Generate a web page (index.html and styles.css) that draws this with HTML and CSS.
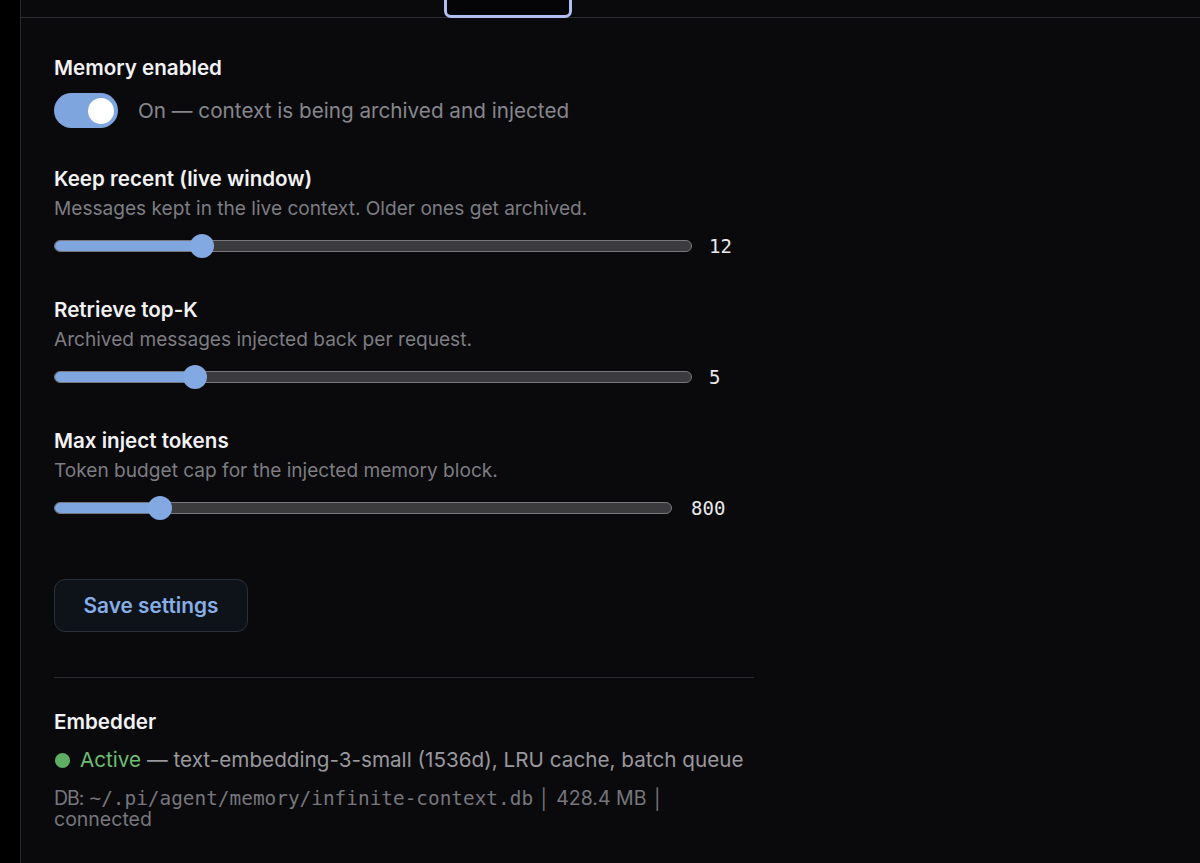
FILE: index.html
```html
<!DOCTYPE html>
<html>
<head>
<meta charset="utf-8">
<link rel="stylesheet" href="styles.css">
</head>
<body>
<div class="app">
  <div class="rail"></div>
  <div class="panel">
    <div class="tabbar">
      <div class="tab"></div>
    </div>
    <div class="content">
      <div class="field">
        <div class="title">Memory enabled</div>
        <div class="toggle-row">
          <div class="toggle"><div class="knob"></div></div>
          <span class="toggle-text">On — context is being archived and injected</span>
        </div>
      </div>

      <div class="setting">
        <div class="label">Keep recent (live window)</div>
        <div class="desc">Messages kept in the live context. Older ones get archived.</div>
        <div class="slider-row">
          <div class="slider" style="--p:0.2222">
            <div class="track"><div class="fill"></div></div>
            <div class="thumb"></div>
          </div>
          <span class="value">12</span>
        </div>
      </div>

      <div class="setting">
        <div class="label">Retrieve top-K</div>
        <div class="desc">Archived messages injected back per request.</div>
        <div class="slider-row">
          <div class="slider" style="--p:0.2105">
            <div class="track"><div class="fill"></div></div>
            <div class="thumb"></div>
          </div>
          <span class="value">5</span>
        </div>
      </div>

      <div class="setting">
        <div class="label">Max inject tokens</div>
        <div class="desc">Token budget cap for the injected memory block.</div>
        <div class="slider-row wide-value">
          <div class="slider" style="--p:0.1579">
            <div class="track"><div class="fill"></div></div>
            <div class="thumb"></div>
          </div>
          <span class="value">800</span>
        </div>
      </div>

      <button class="save-btn">Save settings</button>

      <div class="divider"></div>

      <div class="embedder">
        <div class="title">Embedder</div>
        <div class="status"><span class="dot"></span><span class="active">Active</span> — text-embedding-3-small (1536d), LRU cache, batch queue</div>
        <div class="meta"><span class="db-key">DB:</span><span class="mono">~/.pi/agent/memory/infinite-context.db</span> │ 428.4 MB │ connected</div>
      </div>
    </div>
  </div>
</div>
</body>
</html>
```

FILE: styles.css
```css
* { box-sizing: border-box; }

html, body {
  margin: 0;
  padding: 0;
  background: #000;
  height: 100%;
}

body {
  font-family: "Inter", "Noto Sans", sans-serif;
  color: #ededf0;
  overflow: hidden;
}

.app {
  display: flex;
  height: 863px;
}

.rail {
  width: 20px;
  flex: none;
  background: #000;
}

.panel {
  flex: 1;
  background: #0a0a0c;
  border-left: 1px solid #2a2a2e;
  display: flex;
  flex-direction: column;
}

.tabbar {
  height: 18px;
  border-bottom: 1px solid #2e2e33;
  display: flex;
  align-items: flex-end;
}

.tab {
  margin-left: 423px;
  width: 128px;
  height: 18px;
  margin-bottom: -1px;
  border: 3px solid #aebff0;
  border-top: none;
  border-radius: 0 0 7px 7px;
  background: #050507;
}

.content {
  width: 733px;
  padding: 38px 0 0 33px;
  display: flex;
  flex-direction: column;
}

.title {
  font-size: 20.6px;
  line-height: 24px;
  font-weight: 600;
  color: #f2f2f4;
}

.toggle-row {
  margin-top: 13px;
  display: flex;
  align-items: center;
  gap: 20px;
}

.toggle {
  width: 64px;
  height: 35px;
  border-radius: 18px;
  background: #7ea5de;
  display: flex;
  align-items: center;
  justify-content: flex-end;
  padding-right: 4px;
}

.knob {
  width: 26px;
  height: 26px;
  border-radius: 50%;
  background: #fff;
}

.toggle-text {
  font-size: 20.7px;
  color: #86868c;
}

.setting {
  margin-top: 39px;
}

.setting + .setting {
  margin-top: 40px;
}

.label {
  font-size: 20.6px;
  line-height: 24px;
  font-weight: 600;
  color: #f2f2f4;
}

.desc {
  margin-top: 6px;
  font-size: 19.1px;
  line-height: 22px;
  color: #7d7d83;
}

.slider-row {
  margin-top: 15px;
  display: flex;
  align-items: center;
  gap: 17px;
}

.slider {
  position: relative;
  width: 638px;
  height: 24px;
  flex: none;
}

.wide-value .slider {
  width: 618px;
}

.wide-value {
  gap: 19px;
}

.track {
  position: absolute;
  left: 0;
  right: 0;
  top: 6px;
  height: 12px;
  border-radius: 6px;
  background: #3b3b3e;
  border: 1px solid #77777c;
  overflow: hidden;
}

.fill {
  height: 100%;
  width: calc(var(--p) * (100% - 24px) + 12px);
  background: #7fa6df;
}

.thumb {
  position: absolute;
  top: 0;
  left: calc(var(--p) * (100% - 24px));
  width: 24px;
  height: 24px;
  border-radius: 50%;
  background: #82a9e2;
}

.value {
  font-family: "DejaVu Sans Mono", "Liberation Mono", monospace;
  font-size: 19px;
  color: #e9e9ec;
}

.save-btn {
  align-self: flex-start;
  margin-top: 59px;
  width: 194px;
  height: 53px;
  border-radius: 11px;
  border: 1px solid #2a3039;
  background: #0e131a;
  color: #87aee6;
  font-family: "Inter", "Noto Sans", sans-serif;
  font-size: 20.8px;
  font-weight: 600;
  padding: 0;
}

.divider {
  margin-top: 45px;
  height: 1px;
  width: 700px;
  background: #2c2c30;
}

.embedder {
  margin-top: 32px;
}

.status {
  margin-top: 13px;
  font-size: 20.7px;
  line-height: 26px;
  color: #98989e;
  display: flex;
  align-items: center;
  white-space: pre;
}

.dot {
  width: 15px;
  height: 15px;
  border-radius: 50%;
  background: #5fae66;
  margin: 0 10px 0 1px;
  flex: none;
}

.active {
  color: #6cbd72;
}

.meta {
  margin-top: 15px;
  width: 700px;
  font-size: 19.5px;
  line-height: 20px;
  color: #77777d;
}

.db-key {
  letter-spacing: -1px;
  margin-right: 6px;
}

.mono {
  font-family: "DejaVu Sans Mono", "Liberation Mono", monospace;
  font-size: 19.4px;
}
```
